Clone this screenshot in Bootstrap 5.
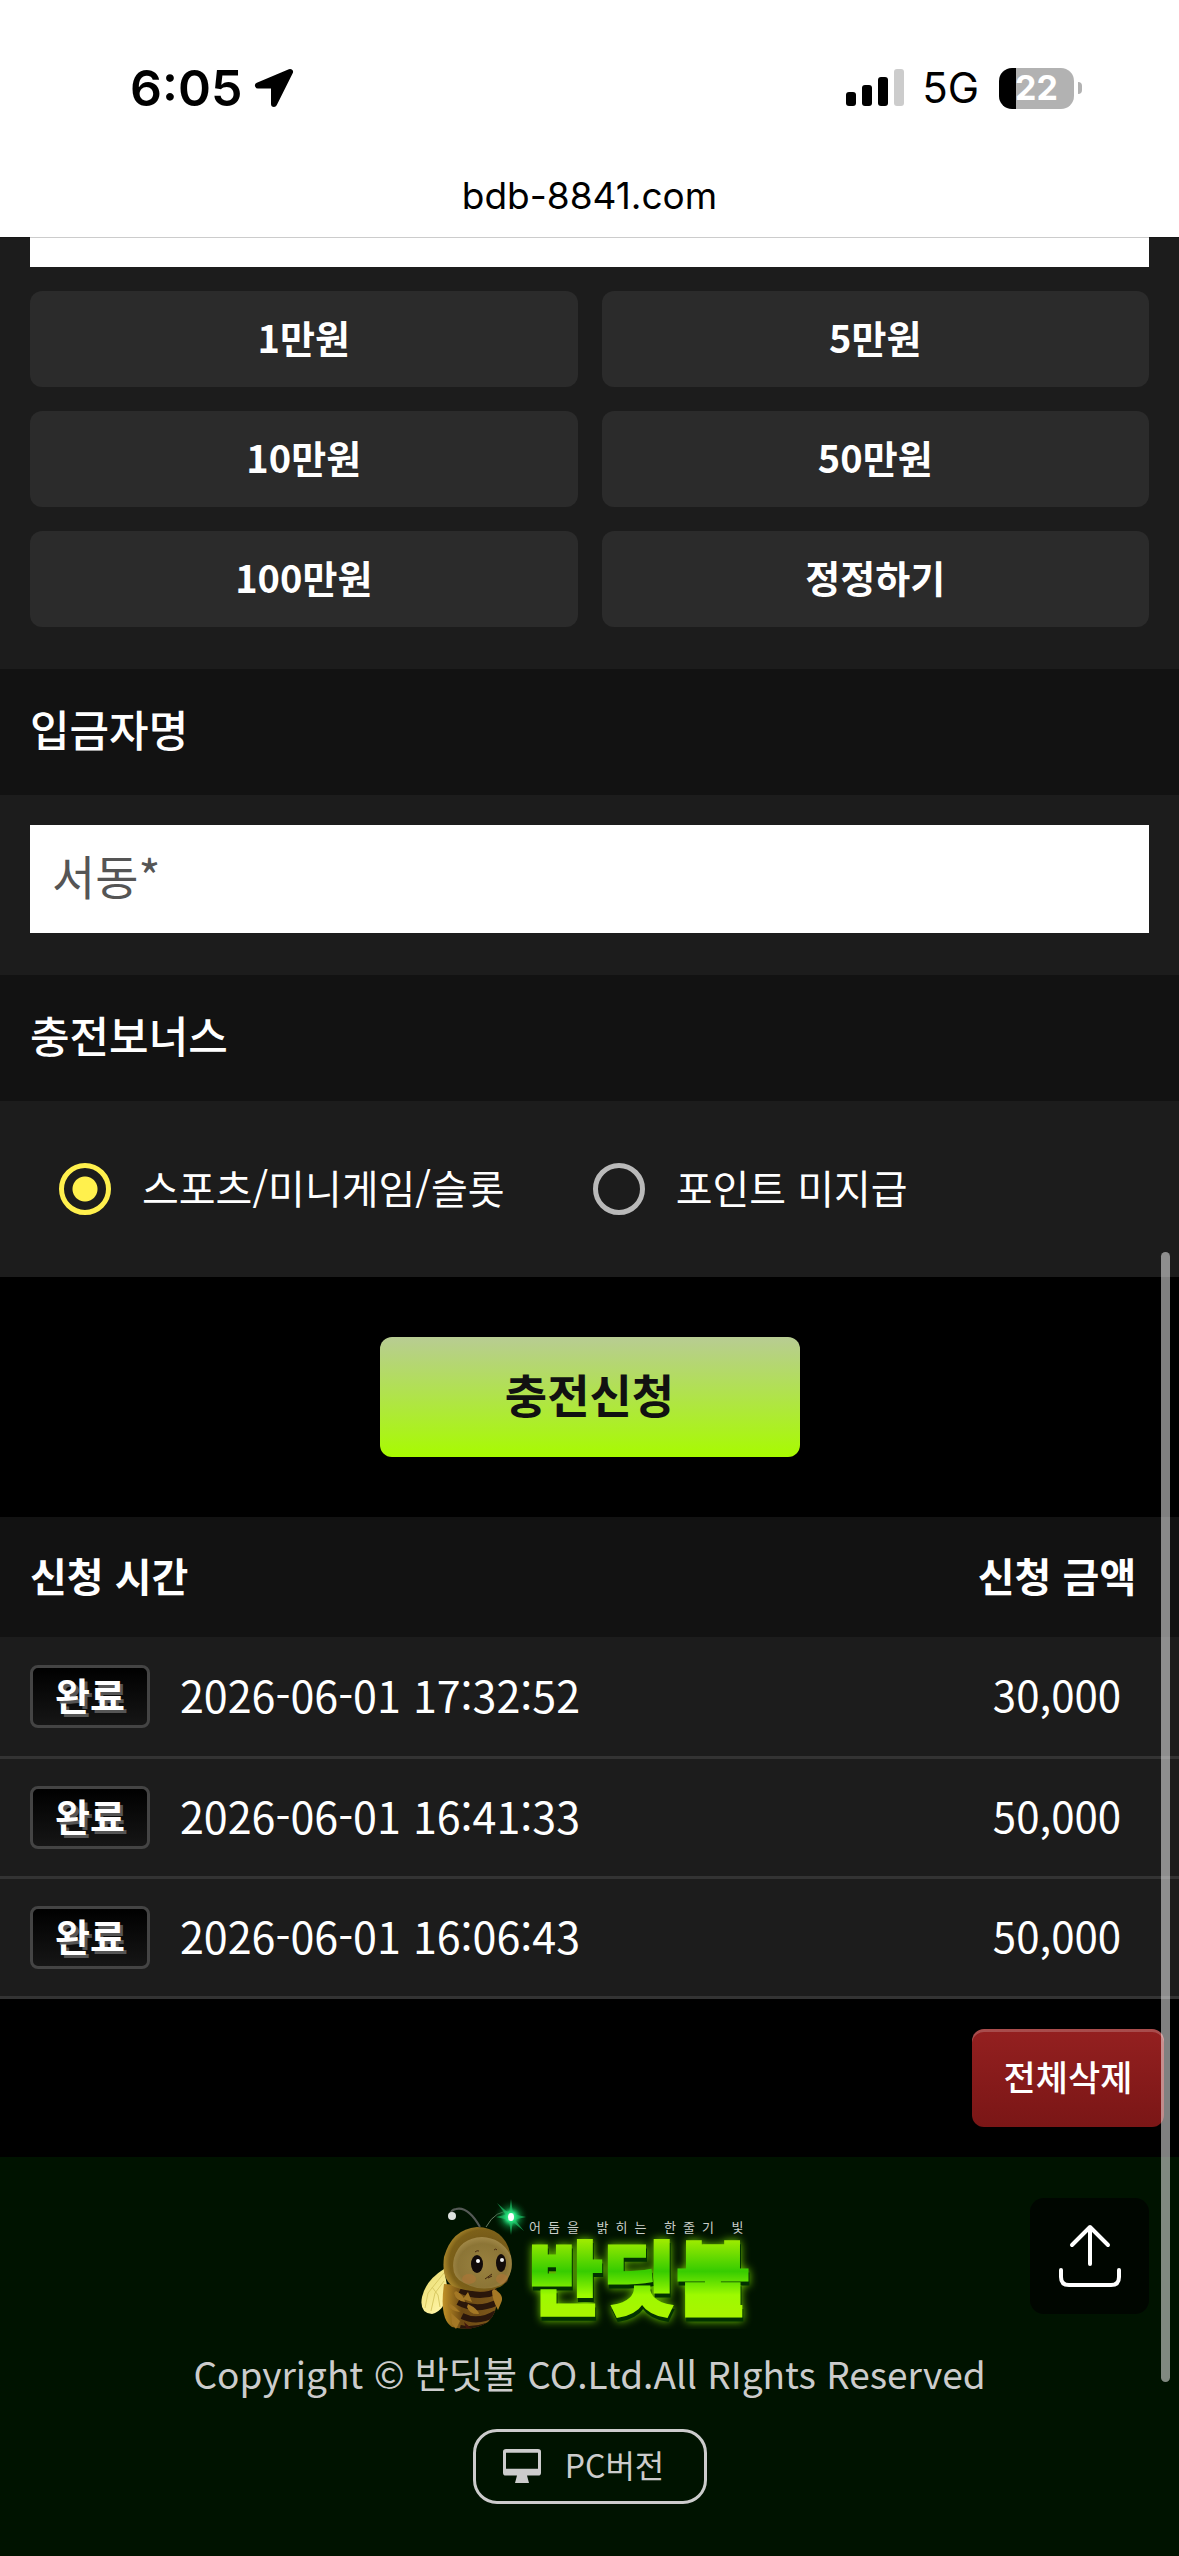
<!DOCTYPE html>
<html lang="ko">
<head>
<meta charset="utf-8">
<meta name="viewport" content="width=device-width, initial-scale=1">
<title>충전신청</title>
<link href="https://cdn.jsdelivr.net/npm/bootstrap@5.3.0/dist/css/bootstrap.min.css" rel="stylesheet">
<style>
body { background: #000; color: #fff; font-family: "Noto Sans CJK KR", sans-serif; }
.ui-font { font-family: Inter, "Noto Sans CJK KR", sans-serif; }

/* phone status bar and address */
.phone-top { background: #fff; color: #000; height: 237px; box-shadow: 0 1px 0 rgba(0,0,0,.2); z-index: 2; }
.status-row { height: 108px; padding: 68px 97px 0 130px; line-height: 40px; }
.clock-group { gap: 12px; }
.clock { font-size: 50px; font-weight: 600; }
.net-label { font-size: 42px; font-weight: 400; }
.site-address { font-size: 37px; line-height: 48px; margin-top: 64px; }
.battery { width: 75px; height: 41px; border-radius: 13px; background: linear-gradient(90deg, #000 17px, #b2b2b2 17px); color: #fff; font-size: 34px; font-weight: 700; }
.battery-tip { width: 4px; height: 12px; border-radius: 0 6px 6px 0; background: #b2b2b2; }

/* form */
.panel { background: #1c1c1c; padding: 30px 30px 42px; }
.panel-first { padding-top: 0; }
.clip-field { height: 30px; }
.field { height: 108px; border: 0; border-radius: 0; padding: 0 24px 10px 22px; font-size: 47px; color: #555; background: #fff; }
.field:focus { color: #555; }
.amount-grid { display: grid; grid-template-columns: 1fr 1fr; gap: 24px; padding-top: 24px; }
.btn-amount { height: 96px; border: 0; border-radius: 12px; background: #2b2b2b; color: #fff; font-size: 38px; line-height: 48px; font-weight: 700; padding: 0 0 4px; }
.section-title { background: #121212; height: 126px; padding: 0 30px 8px; font-size: 43px; line-height: 60px; font-weight: 500; margin: 0; }
.bonus { background: #1c1c1c; min-height: 176px; padding: 0 59px; gap: 88px; }
.bonus-choice { gap: 31px; font-size: 40px; line-height: 52px; }
.bonus-choice span { padding-bottom: 4px; }
.bonus-choice input { appearance: none; width: 52px; height: 52px; margin: 0; border: 5px solid #b9b9b9; border-radius: 50%; }
.bonus-choice input:checked { border-color: #fff04d; background: radial-gradient(circle, #fff04d 12px, transparent 13px); }
.submit-area { padding: 60px 0; }
.btn-submit { width: 420px; height: 120px; border: 0; border-radius: 12px; background: linear-gradient(#b8cc93, #a8fb00); color: #111; font-size: 46px; line-height: 60px; font-weight: 700; padding: 0 0 8px; }

/* history */
.history { --bs-table-bg: transparent; --bs-table-color: #fff; color: #fff; margin: 0; table-layout: fixed; }
.history tr > * { height: 120px; padding: 0 30px; border: 0; vertical-align: middle; background: #1c1c1c; font-size: 43px; line-height: 54px; }
.history thead th { background: #121212; font-size: 40px; font-weight: 700; padding-bottom: 4px; }
.history tbody td { border-bottom: 3px solid #333; }
.history .amount-col { width: 244px; padding: 0 0 4px; text-align: center; }
.history tbody .amount-col { font-size: 42px; }
.stamp { padding-bottom: 4px; margin-left: 30px; }
.done-tag { width: 120px; height: 63px; flex: none; border: 3px solid #444; border-radius: 8px; background: linear-gradient(#000, #161616); font-size: 38px; line-height: 52px; font-weight: 700; text-shadow: 3px 3px 0 #555; text-align: center; }
.delete-area { padding: 30px 15px; }
.btn-clear { width: 192px; height: 98px; border: 0; border-radius: 12px; padding: 0 0 4px; background: linear-gradient(#942020, #7a1616); box-shadow: inset 0 3px 0 rgba(255,255,255,.2); color: #fff; font-size: 35px; line-height: 48px; font-weight: 500; }

/* footer */
.site-footer { background: #001300; color: #ccc; padding: 32px 30px 40px; }
.legal { font-size: 37px; line-height: 48px; margin: 20px 0 32px; }
.pc-link { height: 75px; width: 234px; border: 3px solid #ccc; border-radius: 24px; color: #ccc; font-size: 32px; line-height: 48px; gap: 24px; text-decoration: none; padding: 0 12px 4px 0; }
.pc-link:hover { color: #fff; }
.to-top { right: 30px; top: 41px; width: 119px; height: 116px; border-radius: 14px; background: #000600; }
.tagline-text { font-size: 13px; letter-spacing: 7px; }
.logo-name { font-size: 80px; font-weight: 900; filter: drop-shadow(1px 4px 0 #023200) drop-shadow(0 0 4px #6cc400); }
.scroll-thumb { right: 9px; top: 1252px; width: 9px; height: 1130px; border-radius: 5px; background: rgba(255,255,255,.5); z-index: 5; }
</style>
<script src="https://cdn.jsdelivr.net/npm/bootstrap@5.3.0/dist/js/bootstrap.bundle.min.js"></script>
</head>
<body class="position-relative d-flex flex-column min-vh-100">

<header class="phone-top ui-font position-relative">
  <div class="status-row d-flex align-items-center justify-content-between">
    <div class="clock-group d-flex align-items-center">
      <span class="clock">6:05</span>
      <svg width="40" height="40" viewBox="0 0 40 40" aria-hidden="true"><path d="M36 4L4 17.500H20V36Z" stroke="#000" stroke-width="6" stroke-linejoin="round"/></svg>
    </div>
    <div class="d-flex align-items-center">
      <svg class="me-3" width="60" height="40" viewBox="0 0 60 40" aria-hidden="true"><rect x="0" y="24" width="10" height="14" rx="3"/><rect x="16" y="17" width="10" height="21" rx="3"/><rect x="32" y="9" width="10" height="29" rx="3"/><rect x="48" y="1" width="10" height="37" rx="3" fill="#ccc"/></svg>
      <span class="net-label me-3">5G</span>
      <span class="battery d-flex align-items-center justify-content-center ms-1">22</span>
      <span class="battery-tip ms-1"></span>
    </div>
  </div>
  <div class="site-address text-center">bdb-8841.com</div>
</header>

<main>
  <form>
    <div class="panel panel-first">
      <div class="clip-field d-flex align-items-end overflow-hidden">
        <input class="field form-control flex-shrink-0" type="text" aria-label="충전금액">
      </div>
      <div class="amount-grid">
        <button type="button" class="btn btn-amount">1만원</button>
        <button type="button" class="btn btn-amount">5만원</button>
        <button type="button" class="btn btn-amount">10만원</button>
        <button type="button" class="btn btn-amount">50만원</button>
        <button type="button" class="btn btn-amount">100만원</button>
        <button type="button" class="btn btn-amount">정정하기</button>
      </div>
    </div>

    <label class="section-title d-flex align-items-center" for="depositor">입금자명</label>
    <div class="panel">
      <input class="field form-control" id="depositor" type="text" value="서동*">
    </div>

    <h2 class="section-title d-flex align-items-center">충전보너스</h2>
    <div class="bonus d-flex align-items-center">
      <label class="bonus-choice d-flex align-items-center"><input type="radio" name="bonus" checked><span>스포츠/미니게임/슬롯</span></label>
      <label class="bonus-choice d-flex align-items-center"><input type="radio" name="bonus"><span>포인트 미지급</span></label>
    </div>

    <div class="submit-area text-center d-flex justify-content-center">
      <button type="button" class="btn btn-submit">충전신청</button>
    </div>
  </form>

  <table class="table history">
    <thead><tr><th scope="col">신청 시간</th><th scope="col" class="amount-col">신청 금액</th></tr></thead>
    <tbody>
      <tr><td><div class="d-flex align-items-center"><span class="done-tag">완료</span><span class="stamp">2026-06-01 17:32:52</span></div></td><td class="amount-col">30,000</td></tr>
      <tr><td><div class="d-flex align-items-center"><span class="done-tag">완료</span><span class="stamp">2026-06-01 16:41:33</span></div></td><td class="amount-col">50,000</td></tr>
      <tr><td><div class="d-flex align-items-center"><span class="done-tag">완료</span><span class="stamp">2026-06-01 16:06:43</span></div></td><td class="amount-col">50,000</td></tr>
    </tbody>
  </table>

  <div class="delete-area d-flex justify-content-end">
    <button type="button" class="btn btn-clear">전체삭제</button>
  </div>
</main>

<footer class="site-footer position-relative flex-grow-1 d-flex flex-column align-items-center">
  <svg width="360" height="140" viewBox="0 0 360 140" role="img" aria-label="반딧불">
    <defs>
      <radialGradient id="glow"><stop offset="0" stop-color="#fff"/><stop offset=".25" stop-color="#2cf08a"/><stop offset=".55" stop-color="#0a7a35" stop-opacity=".6"/><stop offset="1" stop-color="#001300" stop-opacity="0"/></radialGradient>
      <radialGradient id="hood" cx=".6" cy=".55" r=".6"><stop offset=".4" stop-color="#6f5416"/><stop offset=".85" stop-color="#7d6119"/><stop offset="1" stop-color="#a8852a"/></radialGradient>
      <radialGradient id="face" cx=".5" cy=".55" r=".6"><stop offset="0" stop-color="#9a8240"/><stop offset=".7" stop-color="#8c7536"/><stop offset="1" stop-color="#aa9150"/></radialGradient>
      <linearGradient id="torso"><stop offset="0" stop-color="#c09127"/><stop offset=".35" stop-color="#6d4a13"/><stop offset="1" stop-color="#7c571b"/></linearGradient>
      <linearGradient id="wing" x2=".6" y2="1"><stop offset="0" stop-color="#e6da6c"/><stop offset="1" stop-color="#fff4a4"/></linearGradient>
      <linearGradient id="letters" gradientUnits="userSpaceOnUse" x1="0" y1="52" x2="0" y2="124"><stop offset="0" stop-color="#9bea00"/><stop offset=".42" stop-color="#36cc00"/><stop offset=".75" stop-color="#9dfa00"/><stop offset="1" stop-color="#a8f500"/></linearGradient>
      <clipPath id="torsoShape"><path d="M34 98Q30 130 44 138Q62 143 78 133Q90 122 86 98Z"/></clipPath>
    </defs>
    <!-- firefly -->
    <path d="M34 80Q16 91 12 108Q9 124 22 125Q35 122 38 102Z" fill="url(#wing)"/>
    <path d="M34 84L18 104L15 119M34 92L25 104L21 122M22 98L28 106L30 118" fill="none" stroke="#d9ca63" stroke-width="1"/>
    <path d="M34 95Q29 130 42 138Q62 143 78 133Q90 122 86 98Z" fill="url(#torso)"/>
    <g clip-path="url(#torsoShape)" fill="none" stroke="#2a160a" stroke-width="6"><path d="M50 101Q70 111 90 101M48 113Q68 124 90 112M52 127Q68 135 86 124"/><path d="M50 139Q62 142 76 137"/></g>
    <path d="M46 102Q54 106 55 113Q46 112 44 104ZM58 103L62 113L53 110ZM58 115Q68 120 69 125Q60 126 57 118ZM84 100Q95 106 91 114L88 121Q82 110 82 102ZM39 114Q46 118 50 123Q41 122 38 116ZM41 124L50 132L46 140L42 135Z" fill="#a47825"/>
    <path d="M54 133L62 140L56 139Z" fill="#40160d"/>
    <path d="M67 38Q42 40 34 68Q31 92 45 98Q65 106 90 98Q103 90 101 68Q96 39 67 38Z" fill="url(#hood)"/>
    <path d="M72 48Q50 49 44 69Q40 88 54 94Q72 104 91 96Q105 86 101 67Q92 49 72 48Z" fill="url(#face)"/>
    <ellipse cx="59" cy="90" rx="7" ry="5" fill="#bb7537" opacity=".45"/><ellipse cx="92" cy="90" rx="6" ry="5" fill="#bb7537" opacity=".45"/>
    <ellipse cx="67" cy="75" rx="6" ry="9" fill="#120b0a"/><ellipse cx="91" cy="74" rx="5" ry="9" fill="#120b0a"/>
    <circle cx="68" cy="72" r="2" fill="#fff"/><circle cx="92" cy="71" r="2" fill="#eee"/>
    <path d="M65 63q2-2 4-1M84 61q2-2 3 0" fill="none" stroke="#4a2c12"/><path d="M75 90l7-5M78 89l4-2" stroke="#40240e"/>
    <path d="M70 38Q58 17 46 20Q40 21 41 26" fill="none" stroke="#555a56" stroke-width="2"/>
    <path d="M76 38Q86 20 101 23" fill="none" stroke="#6a8067" stroke-width="1"/>
    <ellipse cx="42" cy="27" rx="4" ry="4" fill="#dde2df"/>
    <circle cx="101" cy="28" r="18" fill="url(#glow)"/>
    <path d="M101 10L103 25L116 28L103 31L101 46L99 31L86 28L99 25ZM87 14L102 27L114 42L99 30Z" fill="#1fd070" opacity=".6"/>
    <ellipse cx="101" cy="28" rx="3" ry="4" fill="#fff"/>
    <!-- wordmark -->
    <text class="logo-name" x="119" y="119" fill="url(#letters)" stroke="url(#letters)" stroke-width="3">반딧불</text>
    <text class="tagline-text" x="119" y="43" fill="#c9cec9">어둠을 밝히는 한줄기 빛</text>
  </svg>
  <p class="legal text-center">Copyright © 반딧불 CO.Ltd.All RIghts Reserved</p>
  <a class="pc-link d-flex align-items-center justify-content-center" href="#">
    <svg class="mt-1" width="38" height="36" viewBox="0 0 38 38" preserveAspectRatio="none" fill="#ccc" aria-hidden="true"><path fill-rule="evenodd" d="M3 1H35Q38 1 38 4V26Q38 29 35 29H24L26 37H12L14 29H3Q0 29 0 26V4Q0 1 3 1ZM3 5V22H35V5Z"/></svg>
    <span>PC버전</span>
  </a>
  <a class="to-top position-absolute d-flex align-items-center justify-content-center" href="#" aria-label="맨 위로">
    <svg width="62" height="64" viewBox="0 0 62 64" fill="none" stroke="#fff" stroke-width="4" stroke-linecap="round" stroke-linejoin="round" aria-hidden="true"><path d="M31 40V3M13 21L31 3L49 21"/><path d="M2 46V53Q2 61 10 61H52Q60 61 60 53V46"/></svg>
  </a>
</footer>

<div class="scroll-thumb position-absolute"></div>
</body>
</html>
